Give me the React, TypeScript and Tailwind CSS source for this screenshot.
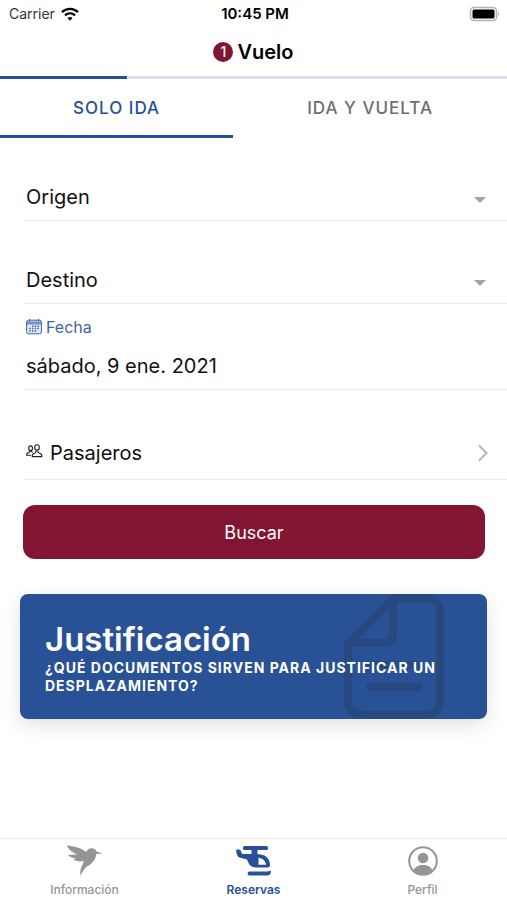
import { useState, type FormEvent, type ReactNode } from 'react';

const TRAYECTOS = [
  { id: 'ida', label: 'SOLO IDA', width: 'w-[46%]' },
  { id: 'vuelta', label: 'IDA Y VUELTA', width: 'w-[54%]' },
];

function WifiIcon() {
  return (
    <svg viewBox="0 0 18 14" className="w-[18px] h-[14px]" fill="none" stroke="#000" strokeWidth="2.4" aria-hidden="true">
      <path d="M1 5.2C5.6.8 12.4.8 17 5.2" />
      <path d="M4 8.4c2.9-2.7 7.1-2.7 10 0" />
      <path d="M6.4 11 9 13.8l2.6-2.8c-1.5-1.3-3.7-1.3-5.2 0z" fill="#000" stroke="none" />
    </svg>
  );
}

function BatteryIcon() {
  return (
    <svg viewBox="0 0 32 16" className="w-8 h-4" aria-hidden="true">
      <rect x="1.5" y="1.5" width="26" height="13" rx="3.5" fill="#fff" stroke="#b4b4b4" strokeWidth="1.5" />
      <rect x="3.5" y="3.5" width="22" height="9" rx="1.5" fill="#000" />
      <path d="M29 6c1.6.4 1.6 3.6 0 4z" fill="#b4b4b4" />
    </svg>
  );
}

function CalendarIcon() {
  return (
    <svg viewBox="0 0 16 16" className="w-4 h-4" fill="none" stroke="currentColor" aria-hidden="true">
      <rect x=".6" y="1.2" width="14.8" height="13.6" rx="2" fill="#e3e9f4" />
      <path d="M.6 3.2h14.8M.6 4.9h14.8M3.5 0v2.5M12.5 0v2.5" />
      <path
        d="M6 7.2h1.5M8.7 7.2h1.5M11.4 7.2h1.5M3.3 9.6h1.5M6 9.6h1.5M8.7 9.6h1.5M11.4 9.6h1.5M3.3 12h1.5M6 12h1.5M8.7 12h1.5"
        strokeWidth="1.5"
      />
    </svg>
  );
}

function PeopleIcon() {
  return (
    <svg viewBox="0 0 17 14" className="w-[17px] h-[14px]" fill="none" stroke="#222" strokeWidth="1.1" aria-hidden="true">
      <ellipse cx="11" cy="3.4" rx="2.3" ry="2.7" />
      <path d="M6.2 12.6c-.3-2 .7-2.9 2.5-3.4.9-.3 1.2-.8 1.1-1.5h2.4c-.1.7.2 1.2 1.1 1.5 1.8.5 2.900 1.400 2.600 3.400z" />
      <ellipse cx="4.6" cy="4.2" rx="1.9" ry="2.3" />
      <path d="M5 11.2H.7c-.2-1.400.5-2.200 1.800-2.600.9-.3 1.200-.7 1.100-1.300h2c0 .6.3 1 1.100 1.300" />
    </svg>
  );
}

function DocumentIcon() {
  return (
    <svg viewBox="0 0 100 125" className="w-[100px] h-[125px]" fill="none" stroke="#28497f" strokeWidth="8" aria-hidden="true">
      <path d="M49 4h33c8 0 14 6 14 14v89c0 8-6 14-14 14H18c-8 0-14-6-14-14V50z" strokeLinejoin="round" />
      <path d="M49 4v36c0 6-4 9-9 9H5" />
      <path d="M26 71h48M26 93h48" strokeLinecap="round" />
    </svg>
  );
}

function BirdIcon() {
  return (
    <svg viewBox="0 0 38 32" className="w-[38px] h-8" fill="currentColor" aria-hidden="true">
      <path d="M.5.500c7 .8 15 2.200 19.500 6.500 1.400-2.400 3.700-4.100 6.600-3.700 1.900.3 3.200 1.600 3.900 3.100 2.600.7 4.400 1.500 6.500 2.700-2.600-.4-4.600-.4-6.800.1-.7 6.300-4.300 9.200-9.200 12.400-2.900 2.300-4.600 5-6.500 9.300-.5-3.700-.2-6.800 1.600-10.300 1-2 1.500-3.500 1.500-4.900-3.600 1.200-7.100 1-10.500-1.400l4-.8c-3.900-.2-6.900-1.300-9.400-3.500l9.800-.4C6.800 7.500 2.800 5 .5.500z" />
    </svg>
  );
}

function HelicopterIcon() {
  return (
    <svg viewBox="0 0 38 32" className="w-[38px] h-8" fill="currentColor" aria-hidden="true">
      <rect x="8" y="1" width="25" height="4" rx="1.5" />
      <path d="M16.500 4h6v6h-6z" />
      <path
        fillRule="evenodd"
        d="M1 5.500c0-1.500 4-1.500 4.700 0L7.200 9H22c7.500 0 13 4 13 10.800 0 1.700-.9 2.700-2.500 2.700H22c-4.600 0-7.300-1.300-8.800-5.200l-1.200-2.800-7.500-2C2.500 11.900 1.600 9.500 1 5.500zM23.500 12.800v6.900H31c-.4-3.800-3.500-6.600-7.500-6.900z"
      />
      <path d="M14.500 26.600h18c.9 0 1-.8 2-.8 1.500 0 1.800 1.300 1.100 2.400-.6 1.400-1.500 2.200-3.100 2.200h-18c-2.500 0-2.500-3.800 0-3.800z" />
    </svg>
  );
}

function ProfileIcon() {
  return (
    <svg viewBox="0 0 30 30" className="w-[30px] h-[30px]" aria-hidden="true">
      <circle cx="15" cy="15" r="13.8" fill="none" stroke="currentColor" strokeWidth="2" />
      <circle cx="15" cy="12" r="5.3" fill="currentColor" />
      <path d="M5.500 24.600c1.500-3.900 5.200-5.500 9.500-5.500s8 1.600 9.500 5.500c-5 5.300-14 5.300-19 0z" fill="currentColor" />
    </svg>
  );
}

type SelectRowProps = { id: string; label: string; options: string[] };

function SelectRow({ id, label, options }: SelectRowProps) {
  return (
    <div className="ml-6 pt-9 border-b border-[#ececec]">
      <div className="grid items-center">
        <select
          id={id}
          aria-label={label}
          defaultValue=""
          className="col-start-1 row-start-1 h-[46px] w-full appearance-none bg-transparent pl-0.5 text-xl text-[#111] outline-none"
        >
          <option value="">{label}</option>
          {options.map((o) => (
            <option key={o}>{o}</option>
          ))}
        </select>
        <svg
          viewBox="0 0 12 6"
          className="col-start-1 row-start-1 mt-1.5 mr-[21px] w-3 h-1.5 justify-self-end pointer-events-none"
          fill="#a3a3a3"
          aria-hidden="true"
        >
          <path d="M0 0h12L6 6z" />
        </svg>
      </div>
    </div>
  );
}

type NavItemProps = { label: string; active?: boolean; children: ReactNode };

function NavItem({ label, active, children }: NavItemProps) {
  return (
    <a
      href="#"
      aria-current={active ? 'page' : undefined}
      className={`flex flex-1 flex-col items-center text-xs leading-4 ${
        active ? 'text-[#28509a] font-semibold' : 'text-[#959595] font-medium'
      }`}
    >
      <span className="flex h-9 items-center">{children}</span>
      <span className="mt-[3px]">{label}</span>
    </a>
  );
}

function App() {
  const [trayecto, setTrayecto] = useState('ida');
  const [fecha, setFecha] = useState('sábado, 9 ene. 2021');

  function handleSubmit(e: FormEvent) {
    e.preventDefault();
  }

  return (
    <div className="flex min-h-screen flex-col bg-white font-['Inter',sans-serif] text-[#111]">
      <div className="grid h-7 grid-cols-3 items-center pl-[9px] pr-1.5 text-sm text-black">
        <span className="flex items-center gap-1.5 text-[#333]">
          Carrier <WifiIcon />
        </span>
        <span className="text-center text-[15px] font-semibold">10:45 PM</span>
        <span className="justify-self-end">
          <BatteryIcon />
        </span>
      </div>

      <header className="flex h-12 items-center justify-center gap-1">
        <span className="flex size-5 items-center justify-center rounded-full bg-[#821632] text-sm font-medium text-white">
          1
        </span>
        <h1 className="text-xl font-semibold text-black">Vuelo</h1>
      </header>

      <div className="h-[3px] bg-[#d9dfec]">
        <div className="h-full w-1/4 bg-[#28509a]" />
      </div>

      <div role="tablist" className="flex">
        {TRAYECTOS.map((t) => (
          <button
            key={t.id}
            type="button"
            role="tab"
            aria-selected={trayecto === t.id}
            onClick={() => setTrayecto(t.id)}
            className={`h-[59px] border-b-[3px] pt-[3px] text-[17px] font-medium tracking-[1px] ${t.width} ${
              trayecto === t.id ? 'border-[#28509a] text-[#28509a]' : 'border-transparent text-[#6e6e6e]'
            }`}
          >
            {t.label}
          </button>
        ))}
      </div>

      <main className="flex-1">
        <form onSubmit={handleSubmit}>
          <SelectRow id="origen" label="Origen" options={['Algeciras', 'Ceuta', 'Málaga']} />
          <SelectRow id="destino" label="Destino" options={['Algeciras', 'Ceuta', 'Málaga']} />

          <div className="ml-6 pt-[11px] pl-0.5 border-b border-[#ececec]">
            <label htmlFor="fecha" className="flex h-6 items-center gap-1 text-base text-[#3f65a8]">
              <CalendarIcon />
              Fecha
            </label>
            <input
              id="fecha"
              value={fecha}
              onChange={(e) => setFecha(e.target.value)}
              className="mt-1 block h-[46px] w-full bg-transparent text-xl outline-none"
            />
          </div>

          <div className="ml-6 pt-9 border-b border-[#ececec]">
            <button type="button" className="flex h-[53px] w-full items-center pl-0.5 pr-[18px] text-xl">
              <span className="pb-1">
                <PeopleIcon />
              </span>
              <span className="ml-[7px]">Pasajeros</span>
              <svg
                viewBox="0 0 12 18"
                className="ml-auto w-3 h-[18px]"
                fill="none"
                stroke="#b5b5b5"
                strokeWidth="2"
                aria-hidden="true"
              >
                <path d="M2 1.500 9.500 9 2 16.500" />
              </svg>
            </button>
          </div>

          <div className="pl-[23px] pr-[22px] pt-[25px]">
            <button type="submit" className="h-[54px] w-full rounded-xl bg-[#821632] pt-0.5 text-lg text-white">
              Buscar
            </button>
          </div>
        </form>

        <a
          href="#"
          className="mx-5 mt-[35px] grid min-h-[125px] overflow-hidden rounded-lg bg-[#285196] text-white shadow-[0_6px_20px_rgba(0,0,0,0.12)]"
        >
          <span className="col-start-1 row-start-1 mr-[43px] justify-self-end">
            <DocumentIcon />
          </span>
          <span className="col-start-1 row-start-1 z-10 px-[25px] pt-[25px]">
            <strong className="block text-[33px] leading-10 font-semibold">Justificación</strong>
            <span className="block text-sm leading-[18px] font-bold tracking-[1px]">
              ¿QUÉ DOCUMENTOS SIRVEN PARA JUSTIFICAR UN DESPLAZAMIENTO?
            </span>
          </span>
        </a>
      </main>

      <nav className="flex h-[62px] border-t border-[#e9e9e9] pt-1">
        <NavItem label="Información">
          <BirdIcon />
        </NavItem>
        <NavItem label="Reservas" active>
          <HelicopterIcon />
        </NavItem>
        <NavItem label="Perfil">
          <ProfileIcon />
        </NavItem>
      </nav>
    </div>
  );
}

export default App;
